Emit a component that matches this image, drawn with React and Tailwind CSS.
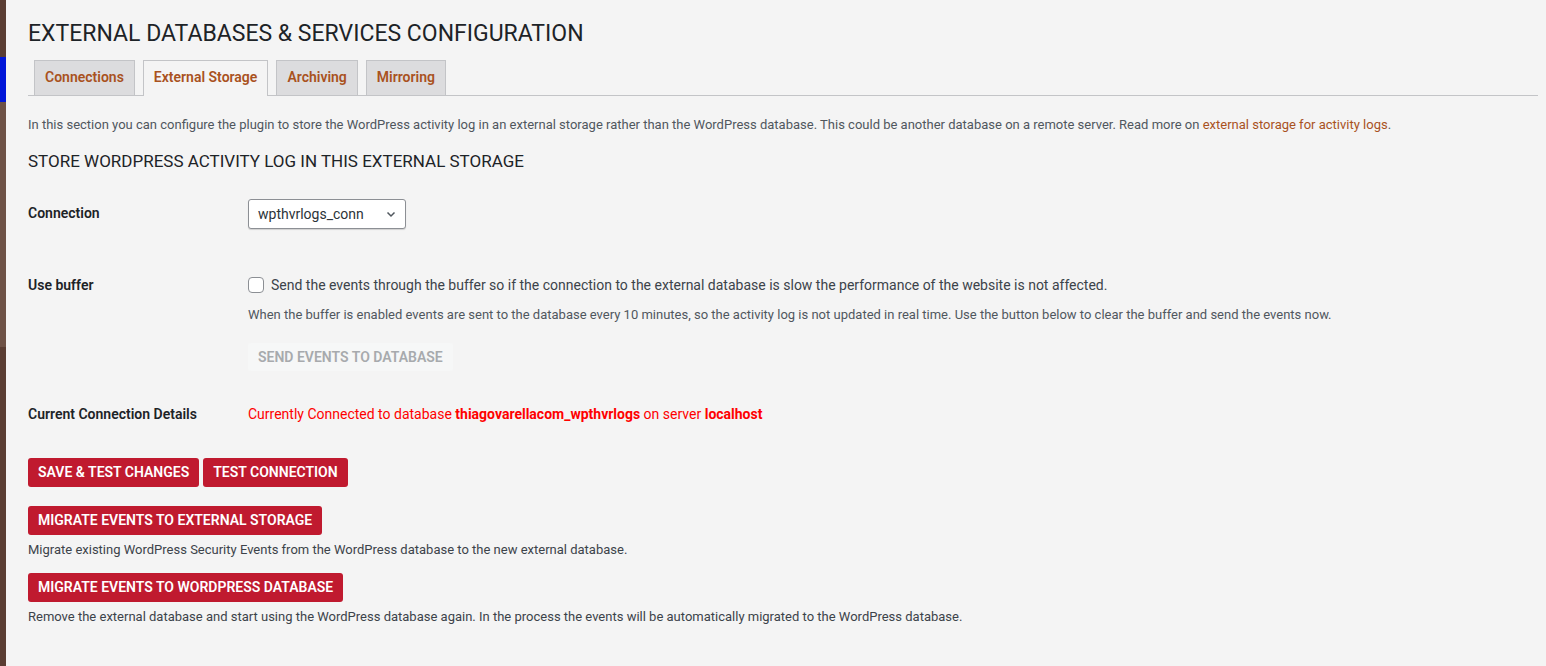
export default function App() {
  const tabs = ["Connections", "External Storage", "Archiving", "Mirroring"];

  return (
    <div className="flex min-h-[666px] bg-[#f4f4f4] font-['Roboto',sans-serif]">
      {/* admin sidebar edge */}
      <div className="flex w-[6px] shrink-0 flex-col">
        <div className="h-[57px] bg-[#5a3d33]" />
        <div className="h-[45px] bg-[#0016d8]" />
        <div className="h-[245px] bg-[#6e5246]" />
        <div className="flex-1 bg-[#5a3d33]" />
      </div>

      <div className="flex-1 pl-[22px] pr-[8px]">
        <h1 className="pt-[20px] text-[23px] leading-[28px] text-[#1d2327]">
          EXTERNAL DATABASES &amp; SERVICES CONFIGURATION
        </h1>

        {/* Tabs */}
        <div className="mt-[12px] flex gap-[8px] border-b border-[#c3c4c7] pl-[6px]">
          {tabs.map((t) => {
            const active = t === "External Storage";
            return (
              <div
                key={t}
                className={
                  active
                    ? "-mb-px border border-b-0 border-[#c3c4c7] bg-[#f4f4f4] px-[10px] pb-[9px] pt-[7px] text-[14px] font-semibold leading-[19px] text-[#a9521e]"
                    : "border border-b-0 border-[#c3c4c7] bg-[#dcdcde] px-[10px] pb-[7px] pt-[7px] text-[14px] font-semibold leading-[19px] text-[#a9521e]"
                }
              >
                {t}
              </div>
            );
          })}
        </div>

        <p className="mt-[20px] text-[13px] leading-[18px] text-[#50575e]">
          In this section you can configure the plugin to store the WordPress
          activity log in an external storage rather than the WordPress
          database. This could be another database on a remote server. Read
          more on{" "}
          <a className="text-[#a9521e]">external storage for activity logs</a>.
        </p>

        <h2 className="mt-[16px] text-[17px] leading-[22px] text-[#1d2327]">
          STORE WORDPRESS ACTIVITY LOG IN THIS EXTERNAL STORAGE
        </h2>

        {/* Connection */}
        <div className="mt-[27px] flex">
          <div className="w-[220px] pt-[5px] text-[14px] font-semibold leading-[18px] text-[#1d2327]">
            Connection
          </div>
          <div className="flex h-[30px] w-[158px] items-center justify-between rounded-[3px] border border-[#8c8f94] bg-white pl-[9px] pr-[8px] text-[14px] text-[#2c3338] shadow-[0_1px_1px_rgba(0,0,0,0.15)]">
            <span>wpthvrlogs_conn</span>
            <svg width="12" height="12" viewBox="0 0 12 12" fill="none">
              <path d="M2.5 4.5 6 8l3.5-3.5" stroke="#50575e" strokeWidth="1.5" />
            </svg>
          </div>
        </div>

        {/* Use buffer */}
        <div className="mt-[47px] flex">
          <div className="w-[220px] text-[14px] font-semibold leading-[18px] text-[#1d2327]">
            Use buffer
          </div>
          <div className="flex flex-col">
            <label className="flex items-center gap-[7px] text-[14px] leading-[18px] text-[#3c434a]">
              <span className="h-[16px] w-[16px] rounded-[4px] border border-[#8c8f94] bg-white" />
              Send the events through the buffer so if the connection to the
              external database is slow the performance of the website is not
              affected.
            </label>
            <p className="mt-[12px] text-[13px] leading-[18px] text-[#50575e]">
              When the buffer is enabled events are sent to the database every
              10 minutes, so the activity log is not updated in real time. Use
              the button below to clear the buffer and send the events now.
            </p>
            <div className="mt-[19px]">
              <button className="h-[28px] rounded-[3px] bg-[#f6f7f7] px-[10px] text-[14px] font-semibold text-[#a7aaad]">
                SEND EVENTS TO DATABASE
              </button>
            </div>
          </div>
        </div>

        {/* Current Connection */}
        <div className="mt-[34px] flex">
          <div className="w-[220px] text-[14px] font-semibold leading-[18px] text-[#1d2327]">
            Current Connection Details
          </div>
          <div className="text-[14px] leading-[18px] text-[#f00]">
            Currently Connected to database{" "}
            <b className="font-bold">thiagovarellacom_wpthvrlogs</b> on server{" "}
            <b className="font-bold">localhost</b>
          </div>
        </div>

        <div className="mt-[35px] flex gap-[4px]">
          <button className="h-[29px] rounded-[3px] bg-[#c01a2f] px-[10px] text-[14px] font-semibold text-white">
            SAVE &amp; TEST CHANGES
          </button>
          <button className="h-[29px] rounded-[3px] bg-[#c01a2f] px-[10px] text-[14px] font-semibold text-white">
            TEST CONNECTION
          </button>
        </div>

        <div className="mt-[19px]">
          <button className="h-[29px] rounded-[3px] bg-[#c01a2f] px-[10px] text-[14px] font-semibold text-white">
            MIGRATE EVENTS TO EXTERNAL STORAGE
          </button>
          <p className="mt-[6px] text-[13px] leading-[18px] text-[#3c434a]">
            Migrate existing WordPress Security Events from the WordPress
            database to the new external database.
          </p>
        </div>

        <div className="mt-[14px]">
          <button className="h-[29px] rounded-[3px] bg-[#c01a2f] px-[10px] text-[14px] font-semibold text-white">
            MIGRATE EVENTS TO WORDPRESS DATABASE
          </button>
          <p className="mt-[6px] text-[13px] leading-[18px] text-[#3c434a]">
            Remove the external database and start using the WordPress database
            again. In the process the events will be automatically migrated to
            the WordPress database.
          </p>
        </div>
      </div>
    </div>
  );
}
